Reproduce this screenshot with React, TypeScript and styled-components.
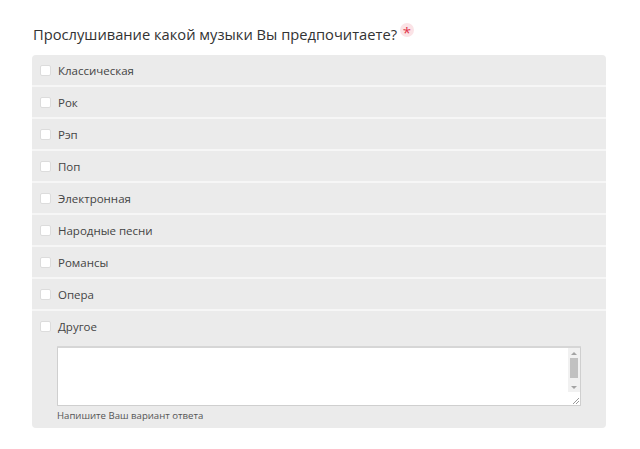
import React from 'react';
import styled, { createGlobalStyle } from 'styled-components';

const GlobalStyle = createGlobalStyle`
  body {
    margin: 0;
    background: #ffffff;
    font-family: 'Open Sans', 'Noto Sans', sans-serif;
  }
`;

const Page = styled.div`
  padding: 24px 34px 0 32px;
`;

const Title = styled.h2`
  margin: 0 0 11px 1px;
  font-size: 14.7px;
  font-weight: 400;
  color: #333;
  line-height: 20px;
  display: flex;
  align-items: flex-start;
`;

const Star = styled.span`
  display: inline-flex;
  align-items: center;
  justify-content: center;
  width: 14px;
  height: 14px;
  margin-left: 3px;
  margin-top: -1px;
  border-radius: 50%;
  background: #fbe3e6;
  color: #e0374c;
  font-size: 15px;
  line-height: 14px;
  padding-top: 4px;
  box-sizing: border-box;
`;

const Panel = styled.div`
  background: #ebebeb;
  border-radius: 4px;
  overflow: hidden;
`;

const Row = styled.label`
  display: flex;
  align-items: center;
  height: 30px;
  padding-left: 8px;
  border-bottom: 2px solid #f6f6f6;
  font-size: 11.5px;
  color: #444;
  &:last-child {
    border-bottom: none;
  }
`;

const Box = styled.span`
  width: 9px;
  height: 9px;
  background: #fff;
  border: 1px solid #dcdcdc;
  border-radius: 2px;
  margin-right: 7px;
  flex-shrink: 0;
`;

const OtherBlock = styled.div`
  padding: 0 0 5px 0;
`;

const OtherRow = styled(Row)`
  border-bottom: none;
`;

const Field = styled.div`
  margin: 5px 25px 0 25px;
`;

const AreaFrame = styled.div`
  display: flex;
  height: 60px;
  box-sizing: border-box;
  border: 1px solid #cfcfcf;
  border-top: 2px solid #d6d6d6;
  border-radius: 1px;
  background: #fff;
`;

const TextArea = styled.textarea`
  flex: 1;
  border: none;
  background: transparent;
  resize: none;
  outline: none;
  overflow: hidden;
  padding: 3px 5px;
  font: inherit;
  font-size: 12px;
`;

const ScrollBar = styled.div`
  width: 12px;
  display: flex;
  flex-direction: column;
  background: #f1f1f1;
`;

const Arrow = styled.div<{ $down?: boolean }>`
  height: 10px;
  display: flex;
  align-items: center;
  justify-content: center;
  &::before {
    content: '';
    border-left: 3px solid transparent;
    border-right: 3px solid transparent;
    ${(p) => (p.$down ? 'border-top: 3px solid #a3a3a3;' : 'border-bottom: 3px solid #a3a3a3;')}
  }
`;

const Thumb = styled.div`
  height: 20px;
  margin: 0 2px;
  background: #c1c1c1;
`;

const Track = styled.div`
  flex: 1;
`;

const Corner = styled.div`
  height: 13px;
  background: #fff;
  display: flex;
  align-items: flex-end;
  justify-content: flex-end;
`;

const Hint = styled.div`
  font-size: 9.6px;
  color: #555;
  margin-top: 3px;
  line-height: 14px;
`;

const options = [
  'Классическая',
  'Рок',
  'Рэп',
  'Поп',
  'Электронная',
  'Народные песни',
  'Романсы',
  'Опера',
];

export default function App() {
  return (
    <Page>
      <GlobalStyle />
      <Title>
        Прослушивание какой музыки Вы предпочитаете?
        <Star>*</Star>
      </Title>
      <Panel>
        {options.map((o) => (
          <Row key={o}>
            <Box />
            {o}
          </Row>
        ))}
        <OtherBlock>
          <OtherRow>
            <Box />
            Другое
          </OtherRow>
          <Field>
            <AreaFrame>
              <TextArea />
              <ScrollBar>
                <Arrow />
                <Thumb />
                <Track />
                <Arrow $down />
                <Corner>
                  <svg width="9" height="9" viewBox="0 0 9 9">
                    <path d="M8 2 L2 8 M8 5 L5 8" stroke="#999" strokeWidth="1" />
                  </svg>
                </Corner>
              </ScrollBar>
            </AreaFrame>
            <Hint>Напишите Ваш вариант ответа</Hint>
          </Field>
        </OtherBlock>
      </Panel>
    </Page>
  );
}
